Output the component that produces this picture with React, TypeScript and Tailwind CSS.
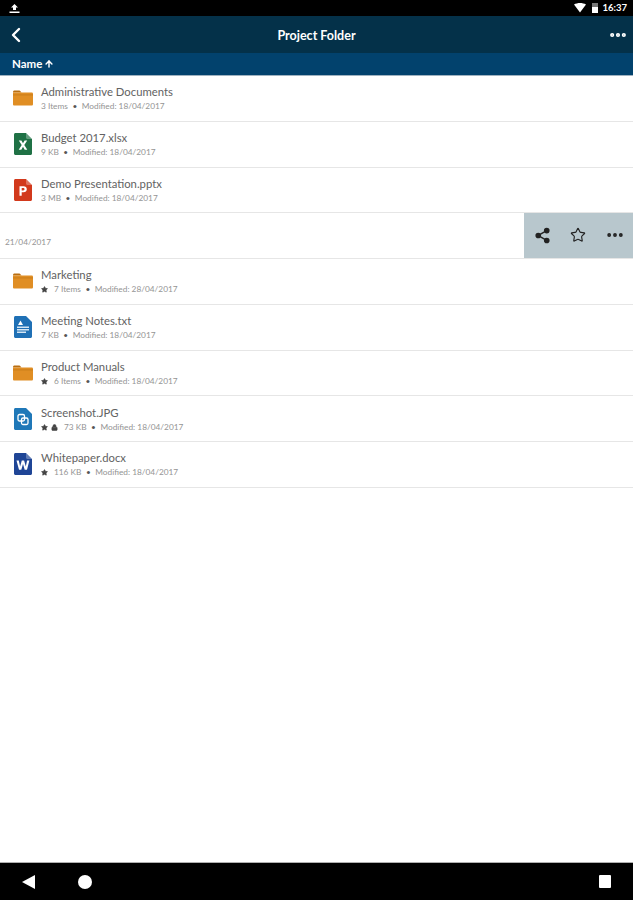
import { ArrowUp, ChevronLeft, Ellipsis, Lock, Share2, Star } from "lucide-react";

const FONT = "font-['Lato','Open_Sans',sans-serif]";

type Kind = "folder" | "xlsx" | "pptx" | "txt" | "jpg" | "docx";

const ROWS: { name: string; meta: string; kind: Kind; star?: boolean; lock?: boolean }[] = [
  { name: "Administrative Documents", meta: "3 Items", kind: "folder" },
  { name: "Budget 2017.xlsx", meta: "9 KB", kind: "xlsx" },
  { name: "Demo Presentation.pptx", meta: "3 MB", kind: "pptx" },
];

const ROWS_AFTER: typeof ROWS = [
  { name: "Marketing", meta: "7 Items", kind: "folder", star: true },
  { name: "Meeting Notes.txt", meta: "7 KB", kind: "txt" },
  { name: "Product Manuals", meta: "6 Items", kind: "folder", star: true },
  { name: "Screenshot.JPG", meta: "73 KB", kind: "jpg", star: true, lock: true },
  { name: "Whitepaper.docx", meta: "116 KB", kind: "docx", star: true },
];

const DATES: Record<string, string> = { Marketing: "28/04/2017" };

function FolderIcon() {
  return (
    <svg width="20" height="16" viewBox="0 0 20 16" className="block">
      <path d="M0 2.2C0 1.2.6.6 1.6.6h4.6c.7 0 1 .3 1.4.8l1 1.2H0z" fill="#b96f12" />
      <path d="M0 2.6h18.6c.8 0 1.4.5 1.4 1.3v10.3c0 .8-.6 1.3-1.4 1.3H1.3C.5 15.500 0 15 0 14.200z" fill="#e08e24" />
      <path d="M0 4.400h20v1H0z" fill="#c97d1a" />
    </svg>
  );
}

function DocIcon({ color, letter }: { color: string; letter?: string }) {
  return (
    <svg width="18" height="22" viewBox="0 0 18 22" className="block">
      <path d="M1.500 0H12l6 6v14.500c0 .8-.7 1.500-1.500 1.500h-15C.7 22 0 21.300 0 20.500v-19C0 .7.700 0 1.500 0z" fill={color} />
      <path d="M12 0l6 6h-4.500C12.700 6 12 5.300 12 4.500z" fill="#ffffff" fillOpacity="0.3" />
      {letter === "X" && <path d="M4.800 7.500h2.600L9 10.300l1.600-2.800h2.600l-2.900 4.500 3 4.700h-2.600L9 13.800l-1.700 2.900H4.700l3-4.700z" fill="#fff" />}
      {letter === "P" && <path d="M5.500 7.200h4c2.100 0 3.300 1.200 3.300 3s-1.300 3-3.300 3H7.700v3.500H5.500zm2.200 1.900v2.300h1.500c.8 0 1.300-.4 1.300-1.150s-.5-1.150-1.300-1.150z" fill="#fff" />}
      {letter === "W" && <path d="M2.500 7.500h2.300l1.300 6 1.700-6h2.300l1.700 6 1.300-6h2.300l-2.400 9.300h-2.300L9 11l-1.700 5.800H5z" fill="#fff" />}
    </svg>
  );
}

function TxtIcon() {
  return (
    <svg width="18" height="22" viewBox="0 0 18 22" className="block">
      <path d="M1.500 0H12l6 6v14.500c0 .8-.7 1.500-1.500 1.500h-15C.7 22 0 21.300 0 20.500v-19C0 .7.700 0 1.500 0z" fill="#1f70b5" />
      <path d="M6.500 4.500L9 9H4z" fill="#fff" />
      <path d="M3 10.500h12v1.400H3zM3 13h12v1.400H3zM3 15.500h9v1.400H3z" fill="#d5e6f4" />
    </svg>
  );
}

function JpgIcon() {
  return (
    <svg width="18" height="22" viewBox="0 0 18 22" className="block">
      <path d="M1.500 0H12l6 6v14.500c0 .8-.7 1.500-1.500 1.500h-15C.7 22 0 21.300 0 20.500v-19C0 .7.700 0 1.500 0z" fill="#1f78b8" />
      <rect x="4" y="6.500" width="6.500" height="6.500" rx="1.500" fill="none" stroke="#fff" strokeWidth="1.300" />
      <rect x="7.500" y="10" width="6.500" height="6.500" rx="1.500" fill="none" stroke="#fff" strokeWidth="1.300" />
    </svg>
  );
}

function FileIcon({ kind }: { kind: Kind }) {
  if (kind === "folder") return <FolderIcon />;
  if (kind === "xlsx") return <DocIcon color="#1f7145" letter="X" />;
  if (kind === "pptx") return <DocIcon color="#d2391c" letter="P" />;
  if (kind === "docx") return <DocIcon color="#1f4596" letter="W" />;
  if (kind === "txt") return <TxtIcon />;
  return <JpgIcon />;
}

function Row({ row }: { row: (typeof ROWS)[number] }) {
  return (
    <div className="flex h-[45.75px] shrink-0 items-center border-b border-[#e6e6e6] bg-white">
      <div className="flex w-[41px] shrink-0 justify-center pl-[4px]">
        <FileIcon kind={row.kind} />
      </div>
      <div className="min-w-0">
        <div className="text-[11.300px] leading-[15px] text-[#626262]">{row.name}</div>
        <div className="mt-[2px] flex items-center text-[8.300px] leading-[11px] text-[#949494]">
          {row.star && <Star size={7} className="mr-[2px] fill-[#444444] text-[#444444]" />}
          {row.lock && <Lock size={7} className="ml-[1px] mr-[2px] fill-[#444444] text-[#444444]" />}
          <span className={row.star ? "ml-[4px]" : ""}>{row.meta}</span>
          <span className="mx-[4.500px] text-[#555555]">•</span>
          <span>Modified: {DATES[row.name] ?? "18/04/2017"}</span>
        </div>
      </div>
    </div>
  );
}

function SwipedRow() {
  return (
    <div className="flex h-[45.75px] shrink-0 overflow-hidden border-b border-[#e6e6e6] bg-white">
      <div className="min-w-0 flex-1 overflow-hidden pt-[24px]">
        <div className="whitespace-nowrap pl-[5px] text-[8.300px] leading-[11px] text-[#949494]">21/04/2017</div>
      </div>
      <div className="flex w-[109px] shrink-0 items-center justify-between bg-[#b8c7cd] pb-[1px] pl-[10px] pr-[8px] text-[#222222]">
        <Share2 size={17} className="fill-[#222222]" />
        <Star size={16} strokeWidth={1.700} />
        <Ellipsis size={20} strokeWidth={2.600} />
      </div>
    </div>
  );
}

export default function App() {
  return (
    <div className={`flex h-[900px] w-[633px] flex-col overflow-hidden bg-white ${FONT}`}>
      {/* Status bar */}
      <div className="flex h-[16px] shrink-0 items-center justify-between bg-black pl-[9px] pr-[6px] text-white">
        <svg width="11" height="11" viewBox="0 0 11 11">
          <path d="M5.500 1l3.500 3.500H7V7H4V4.500H2zM0.500 8.500h10V10h-10z" fill="#fff" />
        </svg>
        <div className="flex items-center">
          <svg width="12" height="10" viewBox="0 0 12 10">
            <path d="M0 1.500C3.500-.5 8.500-.5 12 1.500L6 9.500z" fill="#fff" />
          </svg>
          <div className="ml-[6px] h-[10px] w-[6px] bg-[linear-gradient(#777777_45%,#ffffff_45%)]" />
          <span className="ml-[5px] text-[9.500px] font-bold leading-none">16:37</span>
        </div>
      </div>

      {/* Toolbar */}
      <div className="relative flex h-[37px] shrink-0 items-center justify-between bg-[#043149] pl-[4px] pr-[5px] pt-[1px] text-white">
        <ChevronLeft size={24} strokeWidth={2.400} />
        <span className="absolute inset-x-0 pt-[3px] text-center text-[12.500px] font-bold">Project Folder</span>
        <Ellipsis size={20} strokeWidth={3} />
      </div>

      {/* Sort bar */}
      <div className="flex h-[22px] shrink-0 items-center gap-[2px] bg-[#02426d] pl-[12px] text-[11.500px] font-bold text-white">
        Name
        <ArrowUp size={10} strokeWidth={3.500} />
      </div>
      <div className="h-[1px] shrink-0 bg-[#9fb2c0]" />

      {/* File list */}
      <div className="flex flex-1 flex-col">
        {ROWS.map((row) => (
          <Row key={row.name} row={row} />
        ))}
        <SwipedRow />
        {ROWS_AFTER.map((row) => (
          <Row key={row.name} row={row} />
        ))}
      </div>

      {/* Navigation bar */}
      <div className="flex h-[38px] shrink-0 items-center justify-between border-t border-[#b0b0b0] bg-black pl-[22px] pr-[22px]">
        <div className="flex items-center gap-[43px]">
          <svg width="13" height="14" viewBox="0 0 13 14">
            <path d="M13 0v14L0 7z" fill="#fff" />
          </svg>
          <div className="h-[14px] w-[14px] rounded-full bg-white" />
        </div>
        <div className="h-[13px] w-[12px] rounded-[1px] bg-white" />
      </div>
    </div>
  );
}
